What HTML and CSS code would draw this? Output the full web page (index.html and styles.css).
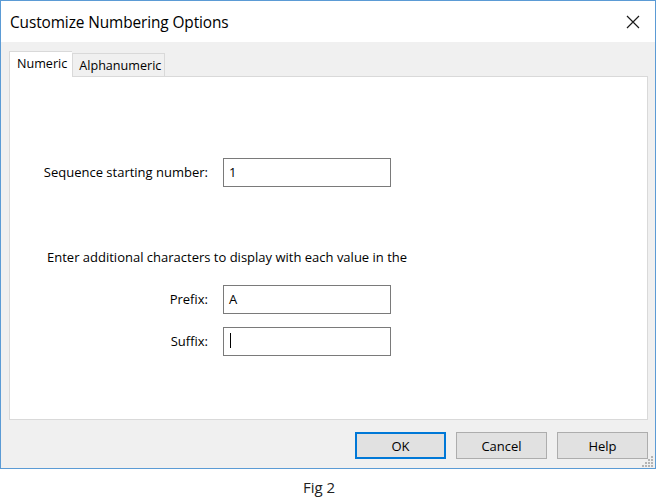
FILE: index.html
```html
<!DOCTYPE html>
<html>
<head>
<meta charset="utf-8">
<link rel="stylesheet" href="styles.css">
</head>
<body>
<div class="window">
  <div class="titlebar">
    <span class="title">Customize Numbering Options</span>
    <svg class="close" width="14" height="14" viewBox="0 0 14 14"><path d="M1 1 L13 13 M13 1 L1 13" stroke="#1a1a1a" stroke-width="1.2" fill="none"/></svg>
  </div>
  <div class="body">
    <div class="tabs">
      <div class="tab active">Numeric</div>
      <div class="tab">Alphanumeric</div>
    </div>
    <div class="panel">
      <div class="row first">
        <label class="lbl">Sequence starting number:</label>
        <div class="input">1</div>
      </div>
      <div class="note">Enter additional characters to display with each value in the</div>
      <div class="row">
        <label class="lbl">Prefix:</label>
        <div class="input">A</div>
      </div>
      <div class="row second">
        <label class="lbl">Suffix:</label>
        <div class="input"><span class="caret"></span></div>
      </div>
    </div>
    <div class="buttons">
      <div class="btn default">OK</div>
      <div class="btn">Cancel</div>
      <div class="btn">Help</div>
    </div>
    <svg class="grip" width="12" height="12" viewBox="0 0 12 12">
      <g fill="#b4b4b4">
        <rect x="9" y="1" width="2" height="2"/>
        <rect x="6" y="4" width="2" height="2"/><rect x="9" y="4" width="2" height="2"/>
        <rect x="3" y="7" width="2" height="2"/><rect x="6" y="7" width="2" height="2"/><rect x="9" y="7" width="2" height="2"/>
        <rect x="0" y="10" width="2" height="2"/><rect x="3" y="10" width="2" height="2"/><rect x="6" y="10" width="2" height="2"/><rect x="9" y="10" width="2" height="2"/>
      </g>
    </svg>
  </div>
</div>
<div class="caption">Fig 2</div>
</body>
</html>
```
FILE: styles.css
```css
* { box-sizing: border-box; }
body {
  margin: 0;
  background: #fff;
  font-family: "Open Sans", "Noto Sans", sans-serif;
  color: #000;
}
.window {
  width: 656px;
  height: 469px;
  border: 1px solid #5b9bd5;
  display: flex;
  flex-direction: column;
}
.titlebar {
  height: 41px;
  background: #fff;
  display: flex;
  align-items: center;
  justify-content: space-between;
  padding: 1px 15px 0 9px;
}
.title {
  font-size: 15.4px;
  color: #000;
  letter-spacing: -0.1px;
}
.close { display: block; }
.body {
  flex: 1;
  position: relative;
  background: #f0f0f0;
  padding: 9px 7px 0 8px;
  display: flex;
  flex-direction: column;
}
.tabs {
  display: flex;
  align-items: flex-end;
  height: 25px;
  position: relative;
  z-index: 1;
}
.tab {
  font-size: 12.6px;
  height: 23px;
  padding: 0 3px 0 6px;
  display: flex;
  align-items: center;
  border: 1px solid #d9d9d9;
  border-bottom: none;
  background: #f0f0f0;
}
.tab.active {
  height: 26px;
  margin-bottom: -1px;
  background: #fff;
  padding: 3px 5px 0 7px;
  align-items: flex-start;
  border-right: none;
}
.panel {
  height: 344px;
  background: #fff;
  border: 1px solid #d9d9d9;
  padding: 81px 0 0 0;
  display: flex;
  flex-direction: column;
}
.row {
  display: grid;
  grid-template-columns: 198px 168px;
  column-gap: 15px;
  align-items: center;
}
.lbl {
  font-size: 13px;
  text-align: right;
  margin-top: -1px;
}
.input {
  height: 29px;
  border: 1px solid #7a7a7a;
  background: #fff;
  font-size: 13px;
  padding: 4px 5px;
  display: flex;
  align-items: flex-start;
}
.caret {
  display: block;
  width: 1px;
  height: 15px;
  background: #000;
  margin: 1px 0 0 1px;
}
.note {
  font-size: 13px;
  margin: 61px 0 19px 37px;
}
.row.second { margin-top: 13px; }
.buttons {
  display: flex;
  justify-content: flex-end;
  gap: 10px;
  margin-top: 12px;
  margin-right: 0;
}
.btn {
  width: 91px;
  height: 27px;
  background: #e1e1e1;
  border: 1px solid #adadad;
  font-size: 13px;
  display: flex;
  align-items: center;
  justify-content: center;
}
.btn.default {
  border: 2px solid #0078d7;
}
.grip {
  position: absolute;
  right: 1px;
  bottom: 1px;
}
.caption {
  width: 638px;
  text-align: center;
  font-size: 15px;
  color: #222;
  margin-top: 8px;
}
```
